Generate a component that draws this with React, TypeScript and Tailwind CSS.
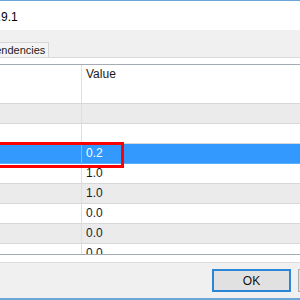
const rows: { value: string; selected?: boolean }[] = [
  { value: '' },
  { value: '' },
  { value: '' },
  { value: '0.2', selected: true },
  { value: '1.0' },
  { value: '1.0' },
  { value: '0.0' },
  { value: '0.0' },
  { value: '0.0' },
];

export default function App() {
  return (
    <div className="relative w-[300px] h-[300px] overflow-hidden bg-white font-['Liberation_Sans',Arial,sans-serif] text-[#1a1a1a] flex flex-col">
      {/* window frame top */}
      <div className="h-px shrink-0 bg-[#6ba6d9]" />

      {/* title */}
      <div className="h-[29px] shrink-0 pt-[8px] text-[12px] leading-[16px] text-black whitespace-nowrap">
        <span className="ml-[-9px]">2.9.1</span>
      </div>

      {/* tab strip */}
      <div className="h-[27px] shrink-0 bg-[#f0f0f0] flex items-end">
        <div className="h-[15px] ml-[-27px] pl-[1px] pr-[3px] border border-b-0 border-[#d6d6d6] bg-[#f4f4f4] text-[11px] leading-[14px] whitespace-nowrap">
          Dependencies
        </div>
      </div>
      <div className="h-px shrink-0 bg-[#dadada]" />

      {/* tab page */}
      <div className="h-[6px] shrink-0 bg-white" />
      <div className="h-[191px] shrink-0 border-y border-[#a5abb5] overflow-hidden flex flex-col">
        {/* header */}
        <div className="h-[19px] shrink-0 flex bg-white text-[12px] leading-[19px]">
          <div className="w-[82px] shrink-0 border-r border-[#e0e0e0]" />
          <div className="pl-[4px]">Value</div>
        </div>
        {rows.map((r, i) => (
          <div
            key={i}
            className={
              'h-[20px] shrink-0 flex text-[12px] leading-[19px] border-b ' +
              (r.selected
                ? 'bg-[#3399ff] text-white border-[#5aaeff]'
                : i % 2 === 1
                ? 'bg-[#ebebeb] border-[#d8d8d8]'
                : 'bg-white border-[#d8d8d8]')
            }
          >
            <div
              className={
                'w-[82px] shrink-0 border-r ' +
                (r.selected ? 'border-[#78bbff]' : 'border-[#dedede]')
              }
            />
            <div className="pl-[4px]">{r.value}</div>
          </div>
        ))}
      </div>
      <div className="h-[7px] shrink-0 bg-white" />
      <div className="h-px shrink-0 bg-[#dcdcdc]" />

      {/* footer */}
      <div className="h-[35px] shrink-0 bg-[#f0f0f0] flex items-start gap-[7px] pl-[212px] pt-[6px]">
        <button className="w-[79px] h-[23px] shrink-0 bg-[#e1e1e1] border-2 border-[#2b86d8] text-[12px] text-[#111]">
          OK
        </button>
        <button className="w-[79px] h-[23px] shrink-0 bg-[#e1e1e1] border border-[#adadad] text-[12px] text-[#111]">
          Cancel
        </button>
      </div>
      <div className="h-[2px] shrink-0 bg-[#6ba6d9]" />

      {/* highlight box */}
      <div className="absolute left-[-4px] top-[142px] w-[128px] h-[26px] border-[3px] border-[#ff0000]" />
    </div>
  );
}
